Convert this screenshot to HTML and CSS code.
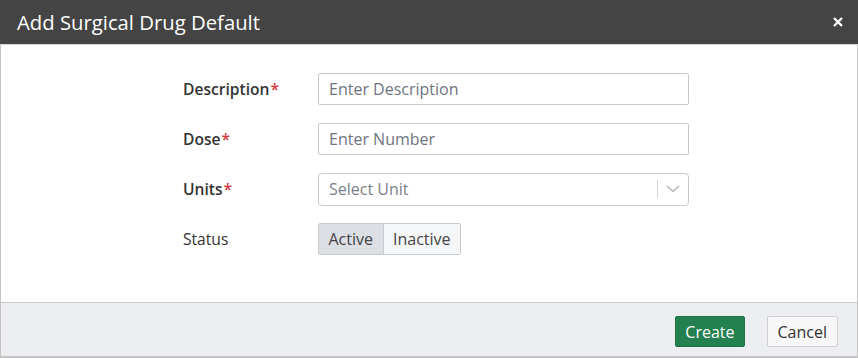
FILE: index.html
```html
<!DOCTYPE html>
<html>
  <head>
    <title>Add Surgical Drug Default</title>
    <link rel="stylesheet" href="styles.css">
  </head>

  <body>
    <div class="modal">
      <div class="modal-header">
        <h2>Add Surgical Drug Default</h2>
        <span class="close">
          <svg width="10" height="10" viewBox="0 0 10 10">
            <path d="M1 1 L9 9 M9 1 L1 9" stroke="#fff" stroke-width="2.4" />
          </svg>
        </span>
      </div>

      <div class="modal-body">
        <div class="form">
          <div class="row">
            <label class="req">Description<span>*</span></label>
            <input type="text" placeholder="Enter Description" />
          </div>
          <div class="row">
            <label class="req">Dose<span>*</span></label>
            <input type="text" placeholder="Enter Number" />
          </div>
          <div class="row">
            <label class="req">Units<span>*</span></label>
            <div class="select">
              <span class="placeholder">Select Unit</span>
              <span class="sep"></span>
              <svg class="chevron" width="14" height="8" viewBox="0 0 14 8">
                <path d="M1 1 L7 6.5 L13 1" fill="none" stroke="#b5b5b5" stroke-width="1.6" />
              </svg>
            </div>
          </div>
          <div class="row">
            <label>Status</label>
            <div class="toggle">
              <div class="opt on">Active</div>
              <div class="opt">Inactive</div>
            </div>
          </div>
        </div>
      </div>

      <div class="modal-footer">
        <button class="btn create">Create</button>
        <button class="btn cancel">Cancel</button>
      </div>
    </div>
  </body>
</html>
```

FILE: styles.css
```css
body {
  margin: 0;
  font-family: "Open Sans", sans-serif;
  color: #333;
}

.modal {
  width: 858px;
  height: 358px;
  box-sizing: border-box;
  border: 1px solid #c4c4c4;
  border-top: 0;
  display: flex;
  flex-direction: column;
}

.modal-header {
  height: 44px;
  background-color: #444;
  border-bottom: 1px solid #d6d6d6;
  display: flex;
  align-items: center;
  justify-content: space-between;
  padding: 0 15px 0 17px;
  margin: 0 -1px;
}

.modal-header h2 {
  margin: 0;
  font-size: 20.3px;
  font-weight: 400;
  color: #fff;
}

.close {
  display: flex;
}

.modal-body {
  flex: 1;
  padding-top: 28px;
}

.form {
  margin-left: 182px;
  display: flex;
  flex-direction: column;
  gap: 18px;
}

.row {
  display: flex;
  align-items: center;
  height: 32px;
}

.row label {
  width: 135px;
  font-size: 15.6px;
  color: #333;
}

.row label.req {
  font-weight: 600;
}

.row label span {
  color: #d0393d;
  margin-left: 1px;
}

input[type="text"] {
  width: 371px;
  height: 32px;
  box-sizing: border-box;
  border: 1px solid #c9c9c9;
  border-radius: 2px;
  padding: 0 10px;
  font-family: "Open Sans", sans-serif;
  font-size: 16px;
  color: #333;
}

input::placeholder {
  color: #6e7480;
}

.select {
  width: 371px;
  height: 33px;
  box-sizing: border-box;
  border: 1px solid #c9c9c9;
  border-radius: 4px;
  display: flex;
  align-items: center;
  padding: 0 8px 0 10px;
  font-size: 16px;
}

.select .placeholder {
  flex: 1;
  color: #7a7f88;
}

.select .sep {
  width: 1px;
  height: 18px;
  background-color: #d4d4d4;
  margin-right: 8px;
}

.toggle {
  display: flex;
  height: 32px;
  box-sizing: border-box;
  border: 1px solid #c6c9ce;
  border-radius: 2px;
  font-size: 16px;
}

.toggle .opt {
  display: flex;
  align-items: center;
  padding: 0 9.5px;
  background-color: #f5f6f8;
  color: #444;
}

.toggle .opt.on {
  background-color: #dcdfe4;
  border-right: 1px solid #c6c9ce;
}

.modal-footer {
  height: 55px;
  box-sizing: border-box;
  border-top: 1px solid #c9c9c9;
  border-bottom: 1px solid #c4c4c4;
  background-color: #edeef2;
  display: flex;
  justify-content: flex-end;
  align-items: flex-start;
  gap: 22px;
  padding: 13px 19px 0 0;
}

.btn {
  height: 31px;
  padding: 0 9px;
  font-family: "Open Sans", sans-serif;
  font-size: 16px;
  border-radius: 2px;
  cursor: pointer;
}

.btn.create {
  background-color: #23804f;
  border: 1px solid #1d7345;
  color: #fff;
}

.btn.cancel {
  background-color: #f7f7f8;
  border: 1px solid #cfcfcf;
  color: #333;
  padding: 0 10px;
}
```
